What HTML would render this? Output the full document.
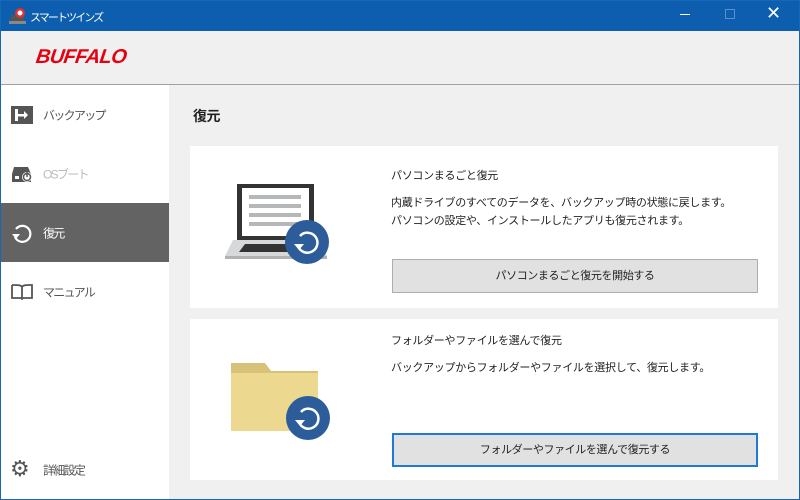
<!DOCTYPE html>
<html><head><meta charset="utf-8"><style>
*{margin:0;padding:0;box-sizing:border-box}
body{width:800px;height:500px;overflow:hidden;font-family:"Liberation Sans","Noto Sans CJK JP",sans-serif;font-size:12px;color:#222;position:relative;background:#f0f0f0}
.abs{position:absolute}
#tb{left:0;top:0;width:800px;height:31px;background:#0d5eae;color:#fff}
#frame{left:0;top:0;width:800px;height:500px;border:1px solid #1767b7;pointer-events:none}
#hdr{left:0;top:31px;width:800px;height:54px;background:#f0f0f0;border-bottom:1px solid #a0a0a0}
#side{left:0;top:85px;width:169px;height:415px;background:#fff}
.nav{position:absolute;left:0;width:169px;height:59px;font-size:12px;letter-spacing:-1.7px;color:#555}
.nav span{position:absolute;left:43px;top:50%;transform:translateY(-50%)}
.card{position:absolute;left:190px;width:588px;background:#fff}
.btn{position:absolute;left:202px;width:366px;height:34px;background:#e1e1e1;border:1px solid #adadad;text-align:center;line-height:32px;font-size:11px;letter-spacing:-0.4px}
.t{position:absolute;left:201px;font-size:11px;letter-spacing:-0.3px}
</style></head><body>
<div id="tb" class="abs">
<svg class="abs" style="left:9px;top:7px" width="18" height="18"><rect x="2" y="8" width="13" height="7" fill="#555"/><rect x="0" y="14" width="17" height="3" fill="#888"/><circle cx="11" cy="6" r="5" fill="#d33"/><circle cx="11" cy="6" r="2.5" fill="#fff"/></svg>
<div class="abs" style="left:30px;top:9px;font-size:11px;letter-spacing:-1.9px">スマートツインズ</div>
<div class="abs" style="left:680px;top:14px;width:10px;height:1px;background:#fff"></div>
<div class="abs" style="left:725px;top:9px;width:10px;height:10px;border:1px solid #5d8fc8"></div>
<div class="abs" style="left:766px;top:3px;font-size:18px">✕</div>
</div>
<div id="hdr" class="abs"><div class="abs" style="left:36px;top:15px;color:#e60012;font:italic bold 20px 'Liberation Sans',sans-serif;letter-spacing:-0.6px;transform:skewX(-8deg)">BUFFALO</div></div>
<div id="side" class="abs">
<div class="nav" style="top:0"><svg class="abs" style="left:11px;top:21px" width="22" height="18"><rect width="22" height="18" fill="#555"/><rect x="4" y="3" width="3" height="12" fill="#fff"/><rect x="4" y="8" width="12" height="2.5" fill="#fff"/><path d="M13 5l4 4-4 4" fill="#fff"/></svg><span>バックアップ</span></div>
<div class="nav" style="top:59px;color:#bbb"><svg class="abs" style="left:11px;top:21px" width="22" height="18"><path d="M3 2h14l3 7v8H1V9z" fill="#555"/><circle cx="16" cy="12" r="5" fill="#fff"/><circle cx="16" cy="12" r="3.5" fill="none" stroke="#555" stroke-width="1.5"/><rect x="15.3" y="7" width="1.5" height="5" fill="#555"/><rect x="4" y="11" width="4" height="3" fill="#fff"/></svg><span>OSブート</span></div>
<div class="nav" style="top:118px;background:#636363;color:#fff"><svg class="abs" style="left:10px;top:18px" width="24" height="24"><path d="M6 8A8 8 0 1 1 5 16" fill="none" stroke="#fff" stroke-width="2.2"/><path d="M2 13l4 5 4-5z" fill="#fff"/></svg><span>復元</span></div>
<div class="nav" style="top:177px"><svg class="abs" style="left:11px;top:20px" width="22" height="18"><path d="M1 3v13h9l1 1 1-1h9V3h-3M1 3h3c3 0 6 0 7 2c1-2 4-2 7-2M11 5v11" fill="none" stroke="#555" stroke-width="1.8"/></svg><span>マニュアル</span></div>
<div class="nav" style="top:355px"><div class="abs" style="left:10px;top:18px;font-size:22px;line-height:22px;color:#555;letter-spacing:0">⚙</div><span>詳細設定</span></div>
</div>
<div class="abs" style="left:193px;top:106px;font-size:14px;font-weight:bold;letter-spacing:-0.5px">復元</div>
<div class="card" style="top:146px;height:162px">
<svg class="abs" style="left:33px;top:36px" width="110" height="85"><rect x="14" y="2" width="77" height="56" fill="#333"/><rect x="19" y="6" width="67" height="48" fill="#fff"/><g fill="#b5b7b9"><rect x="26" y="13" width="52" height="4"/><rect x="26" y="22" width="52" height="4"/><rect x="26" y="31" width="52" height="4"/><rect x="26" y="40" width="52" height="4"/></g><path d="M10 58h86l8 16H2z" fill="#d6d8da"/><path d="M22 62h66l4 8H16z" fill="#333"/><rect x="2" y="74" width="102" height="3" fill="#b0b2b4"/><circle cx="84" cy="60" r="22" fill="#2c5d9a"/><path d="M77 54A10 10 0 1 1 75 64" fill="none" stroke="#fff" stroke-width="2.5"/><path d="M71 62l5 6 5-6z" fill="#fff"/></svg>
<div class="t" style="top:21px">パソコンまるごと復元</div>
<div class="t" style="top:48px;line-height:18px">内蔵ドライブのすべてのデータを、バックアップ時の状態に戻します。<br>パソコンの設定や、インストールしたアプリも復元されます。</div>
<div class="btn" style="top:113px">パソコンまるごと復元を開始する</div>
</div>
<div class="card" style="top:319px;height:161px">
<svg class="abs" style="left:38px;top:40px" width="110" height="85"><path d="M3 4h34l6 8h47v60H3z" fill="#d8c27a"/><rect x="3" y="14" width="87" height="58" fill="#ecd88e"/><circle cx="80" cy="59" r="22" fill="#2c5d9a"/><path d="M73 53A10 10 0 1 1 71 63" fill="none" stroke="#fff" stroke-width="2.5"/><path d="M67 61l5 6 5-6z" fill="#fff"/></svg>
<div class="t" style="top:13px">フォルダーやファイルを選んで復元</div>
<div class="t" style="top:40px">バックアップからフォルダーやファイルを選択して、復元します。</div>
<div class="btn" style="top:114px;border:2px solid #1f7ad6;line-height:30px">フォルダーやファイルを選んで復元する</div>
</div>
<div id="frame" class="abs"></div>
</body></html>
